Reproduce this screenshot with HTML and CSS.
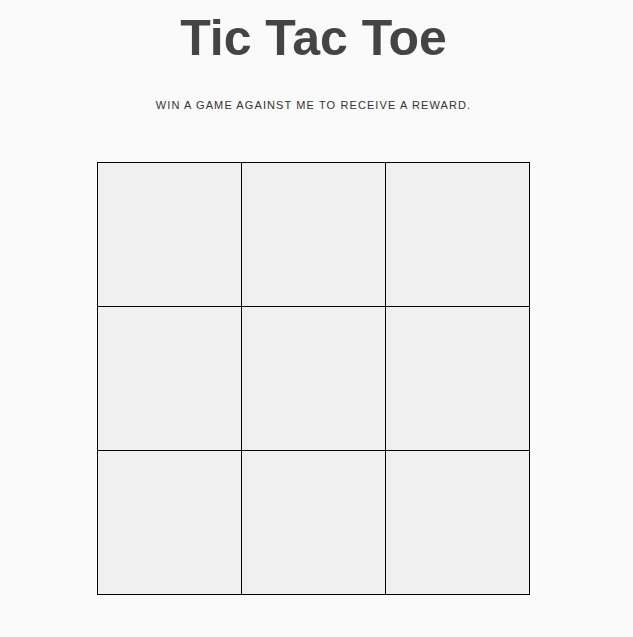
FILE: index.html
```html
<!DOCTYPE html>
<html lang="en">
<head>
  <meta charset="UTF-8" />
  <meta name="viewport" content="width=device-width, initial-scale=1.0" />
  <title>Tic Tac Toe</title>
  <link rel="stylesheet" href="styles.css">
</head>
<body>
  <div id="game">
    <h1 class="title">Tic Tac Toe</h1>
    <p class="subtitle">Win a game against me to receive a reward.</p>
    <div class="board">
      <div class="cell"></div>
      <div class="cell"></div>
      <div class="cell"></div>
      <div class="cell"></div>
      <div class="cell"></div>
      <div class="cell"></div>
      <div class="cell"></div>
      <div class="cell"></div>
      <div class="cell"></div>
    </div>
  </div>
</body>
</html>
```

FILE: styles.css
```css
body {
  font-family: "Liberation Sans", Arial, sans-serif;
  background-color: #fafafa;
  color: #444;
  margin: 0;
  padding: 0;
}

#game {
  width: 627px;
  display: flex;
  flex-direction: column;
  align-items: center;
}

.title {
  font-size: 50px;
  font-weight: bold;
  letter-spacing: 0;
  margin: 8px 0 0;
  line-height: 60px;
  color: #444;
}

.subtitle {
  font-size: 11px;
  text-transform: uppercase;
  letter-spacing: 1.1px;
  color: #333;
  margin: 30px 0 0;
  line-height: 14px;
}

.board {
  margin-top: 50px;
  display: grid;
  grid-template-columns: repeat(3, 144px);
  grid-template-rows: repeat(3, 144px);
  border-left: 1px solid #000;
  border-top: 1px solid #000;
}

.cell {
  background-color: #f0f0f0;
  border-right: 1px solid #000;
  border-bottom: 1px solid #000;
}
```
